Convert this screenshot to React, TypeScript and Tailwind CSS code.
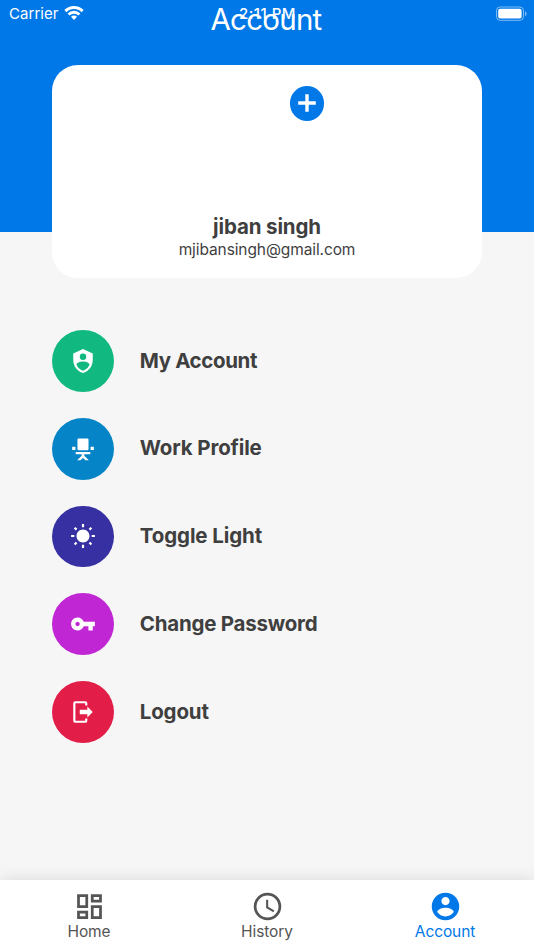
import React from "react";

type IconProps = { d: string; className?: string };

function Icon({ d, className }: IconProps) {
  return (
    <svg viewBox="0 0 24 24" fill="currentColor" fillRule="evenodd" className={className}>
      <path d={d} />
    </svg>
  );
}

const shield =
  "M12,1L3,5V11C3,16.55 6.84,21.74 12,23C17.16,21.74 21,16.55 21,11V5L12,1M12,5A3,3 0 0,1 15,8A3,3 0 0,1 12,11A3,3 0 0,1 9,8A3,3 0 0,1 12,5M17.13,17C15.92,18.85 14.11,20.24 12,20.92C9.89,20.24 8.08,18.85 6.87,17C6.53,16.5 6.24,16 6,15.47C6,13.82 8.71,12.47 12,12.47C15.29,12.47 18,13.79 18,15.47C17.76,16 17.47,16.5 17.13,17Z";
const chair =
  "M8 2.4H16A1.1 1.1 0 0 1 17.1 3.5V12A1.1 1.1 0 0 1 16 13.1H8A1.1 1.1 0 0 1 6.9 12V3.5A1.1 1.1 0 0 1 8 2.4ZM2 10H5V13H2ZM19 10H22V13H19ZM5.3 14.7H18.7V16.8H13.2V18.2L17.4 22.4H14.4L12 20.3L9.6 22.4H6.6L10.8 18.2V16.8H5.3Z";
const sun =
  "M3.55 19.09L4.96 20.5L6.76 18.71L5.34 17.29M12 6C8.69 6 6 8.69 6 12S8.69 18 12 18 18 15.31 18 12C18 8.68 15.31 6 12 6M20 13H23V11H20M17.24 18.71L19.04 20.5L20.45 19.09L18.66 17.29M20.45 5L19.04 3.6L17.24 5.39L18.66 6.81M13 1H11V4H13M6.76 5.39L4.96 3.6L3.55 5L5.34 6.81L6.76 5.39M1 13H4V11H1M13 20H11V23H13";
const key =
  "M12.65 10C11.83 7.67 9.61 6 7 6c-3.31 0-6 2.69-6 6s2.69 6 6 6c2.61 0 4.83-1.67 5.65-4H17v4h4v-4h2v-4H12.65zM7 14c-1.1 0-2-.9-2-2s.9-2 2-2 2 .9 2 2-.9 2-2 2z";
const logout =
  "M5 2H14A2 2 0 0 1 16 4V6H14V4H5V20H14V18H16V20A2 2 0 0 1 14 22H5A2 2 0 0 1 3 20V4A2 2 0 0 1 5 2ZM9 10H16V7L21 12L16 17V14H9Z";
const dashboard =
  "M19 5v2h-4V5h4M9 5v6H5V5h4m10 8v6h-4v-6h4M9 17v2H5v-2h4M21 3h-8v6h8V3zM11 3H3v10h8V3zm10 8h-8v10h8V11zm-10 4H3v6h8v-6z";
const clock =
  "M12,20A8,8 0 0,0 20,12A8,8 0 0,0 12,4A8,8 0 0,0 4,12A8,8 0 0,0 12,20M12,2A10,10 0 0,1 22,12A10,10 0 0,1 12,22C6.47,22 2,17.5 2,12A10,10 0 0,1 12,2M12.5,7V12.25L17,14.92L16.25,16.15L11,13V7H12.5Z";
const account =
  "M12 2C6.48 2 2 6.48 2 12s4.48 10 10 10 10-4.48 10-10S17.52 2 12 2zm0 3c1.66 0 3 1.34 3 3s-1.34 3-3 3-3-1.34-3-3 1.34-3 3-3zm0 14.2c-2.5 0-4.71-1.28-6-3.22.03-1.99 4-3.08 6-3.08 1.99 0 5.97 1.09 6 3.08-1.29 1.94-3.5 3.22-6 3.22z";

const items = [
  { label: "My Account", icon: shield, color: "bg-[#11b981]", tracking: "tracking-[-0.37px]" },
  { label: "Work Profile", icon: chair, color: "bg-[#0584c7]", tracking: "tracking-[-0.14px]" },
  { label: "Toggle Light", icon: sun, color: "bg-[#3730a3]", tracking: "tracking-[-0.1px]" },
  { label: "Change Password", icon: key, color: "bg-[#c026d3]", tracking: "tracking-[-0.22px]" },
  { label: "Logout", icon: logout, color: "bg-[#e11d48]", tracking: "tracking-[-0.15px]" },
];

const tabs = [
  { label: "Home", icon: dashboard, color: "text-[#555555]" },
  { label: "History", icon: clock, color: "text-[#555555]" },
  { label: "Account", icon: account, color: "text-[#0078e8]" },
];

function StatusBar() {
  return (
    <div className="absolute inset-x-0 top-0 grid h-7 grid-cols-3 items-center pl-[9px] pr-[7px] text-[15px] text-white">
      <div className="flex items-center gap-[5.5px]">
        <span className="tracking-[0.05px]">Carrier</span>
        <svg viewBox="0 0 20 16" className="mt-[-2px] h-4 w-5" fill="none" stroke="white" strokeWidth="2.9">
          <path d="M1.4 6.1a12.2 12.2 0 0 1 17.2 0" />
          <path d="M4.6 9.5a7.65 7.65 0 0 1 10.8 0" />
          <path d="M7 11.8a4.2 4.2 0 0 1 6 0L10 15z" fill="white" stroke="none" />
        </svg>
      </div>
      <span className="pr-px text-center text-[15px] font-medium tracking-[0.5px]">2:11 PM</span>
      <svg viewBox="0 0 32 16" className="h-4 w-8 justify-self-end" fill="none">
        <rect x="1.5" y="1" width="27" height="13.3" rx="3.7" stroke="white" strokeOpacity=".5" />
        <rect x="3.2" y="2.8" width="23.4" height="9.8" rx="2" fill="white" />
        <path d="M30 5.2c2 .7 2 4.2 0 5z" fill="white" fillOpacity=".5" />
      </svg>
    </div>
  );
}

export default function App() {
  return (
    <div className="relative flex h-[950px] w-[534px] flex-col overflow-hidden bg-[#f6f6f6] font-['Inter',sans-serif] text-[#3f3f3f]">
      <header className="h-[232px] shrink-0 bg-[#0078e8]">
        <h1 className="pr-0.5 text-center text-[29.5px] leading-[39px] tracking-[-0.75px] text-white">Account</h1>
      </header>
      <StatusBar />

      <section className="relative mx-[52px] -mt-[167px] flex h-[213px] shrink-0 flex-col items-center rounded-[26px] bg-white pt-[21px]">
        <button className="ml-[80px] flex size-[34.5px] shrink-0 items-center justify-center rounded-full bg-[#0078e8] text-white">
          <svg viewBox="0 0 18 18" className="size-[18px]" stroke="currentColor" strokeWidth="3.4">
            <path d="M9 .2V17.8M.2 9H17.8" />
          </svg>
        </button>
        <h2 className="mt-[92.5px] text-[20.5px] leading-[28px] font-bold tracking-[-0.12px]">jiban singh</h2>
        <p className="text-[15.5px] leading-[17px] tracking-[-0.1px]">mjibansingh@gmail.com</p>
      </section>

      <main className="mt-[52px] flex flex-1 flex-col gap-[26px] px-[51.75px]">
        {items.map((item) => (
          <div key={item.label} className="flex h-[61.75px] items-center gap-[26.25px]">
            <div className={`flex size-[61.75px] items-center justify-center rounded-full text-white ${item.color}`}>
              <Icon d={item.icon} className="size-[26px]" />
            </div>
            <span className={`text-[20.5px] font-bold whitespace-nowrap ${item.tracking}`}>{item.label}</span>
          </div>
        ))}
      </main>

      <nav className="grid h-[70px] shrink-0 grid-cols-3 bg-white shadow-[0_0_16px_rgba(0,0,0,0.12)]">
        {tabs.map((tab) => (
          <div key={tab.label} className={`flex flex-col items-center pt-[10px] ${tab.color}`}>
            <Icon d={tab.icon} className="size-[33px]" />
            <span className="-mt-px text-[15.5px] leading-[20px] tracking-[-0.1px]">{tab.label}</span>
          </div>
        ))}
      </nav>
    </div>
  );
}
